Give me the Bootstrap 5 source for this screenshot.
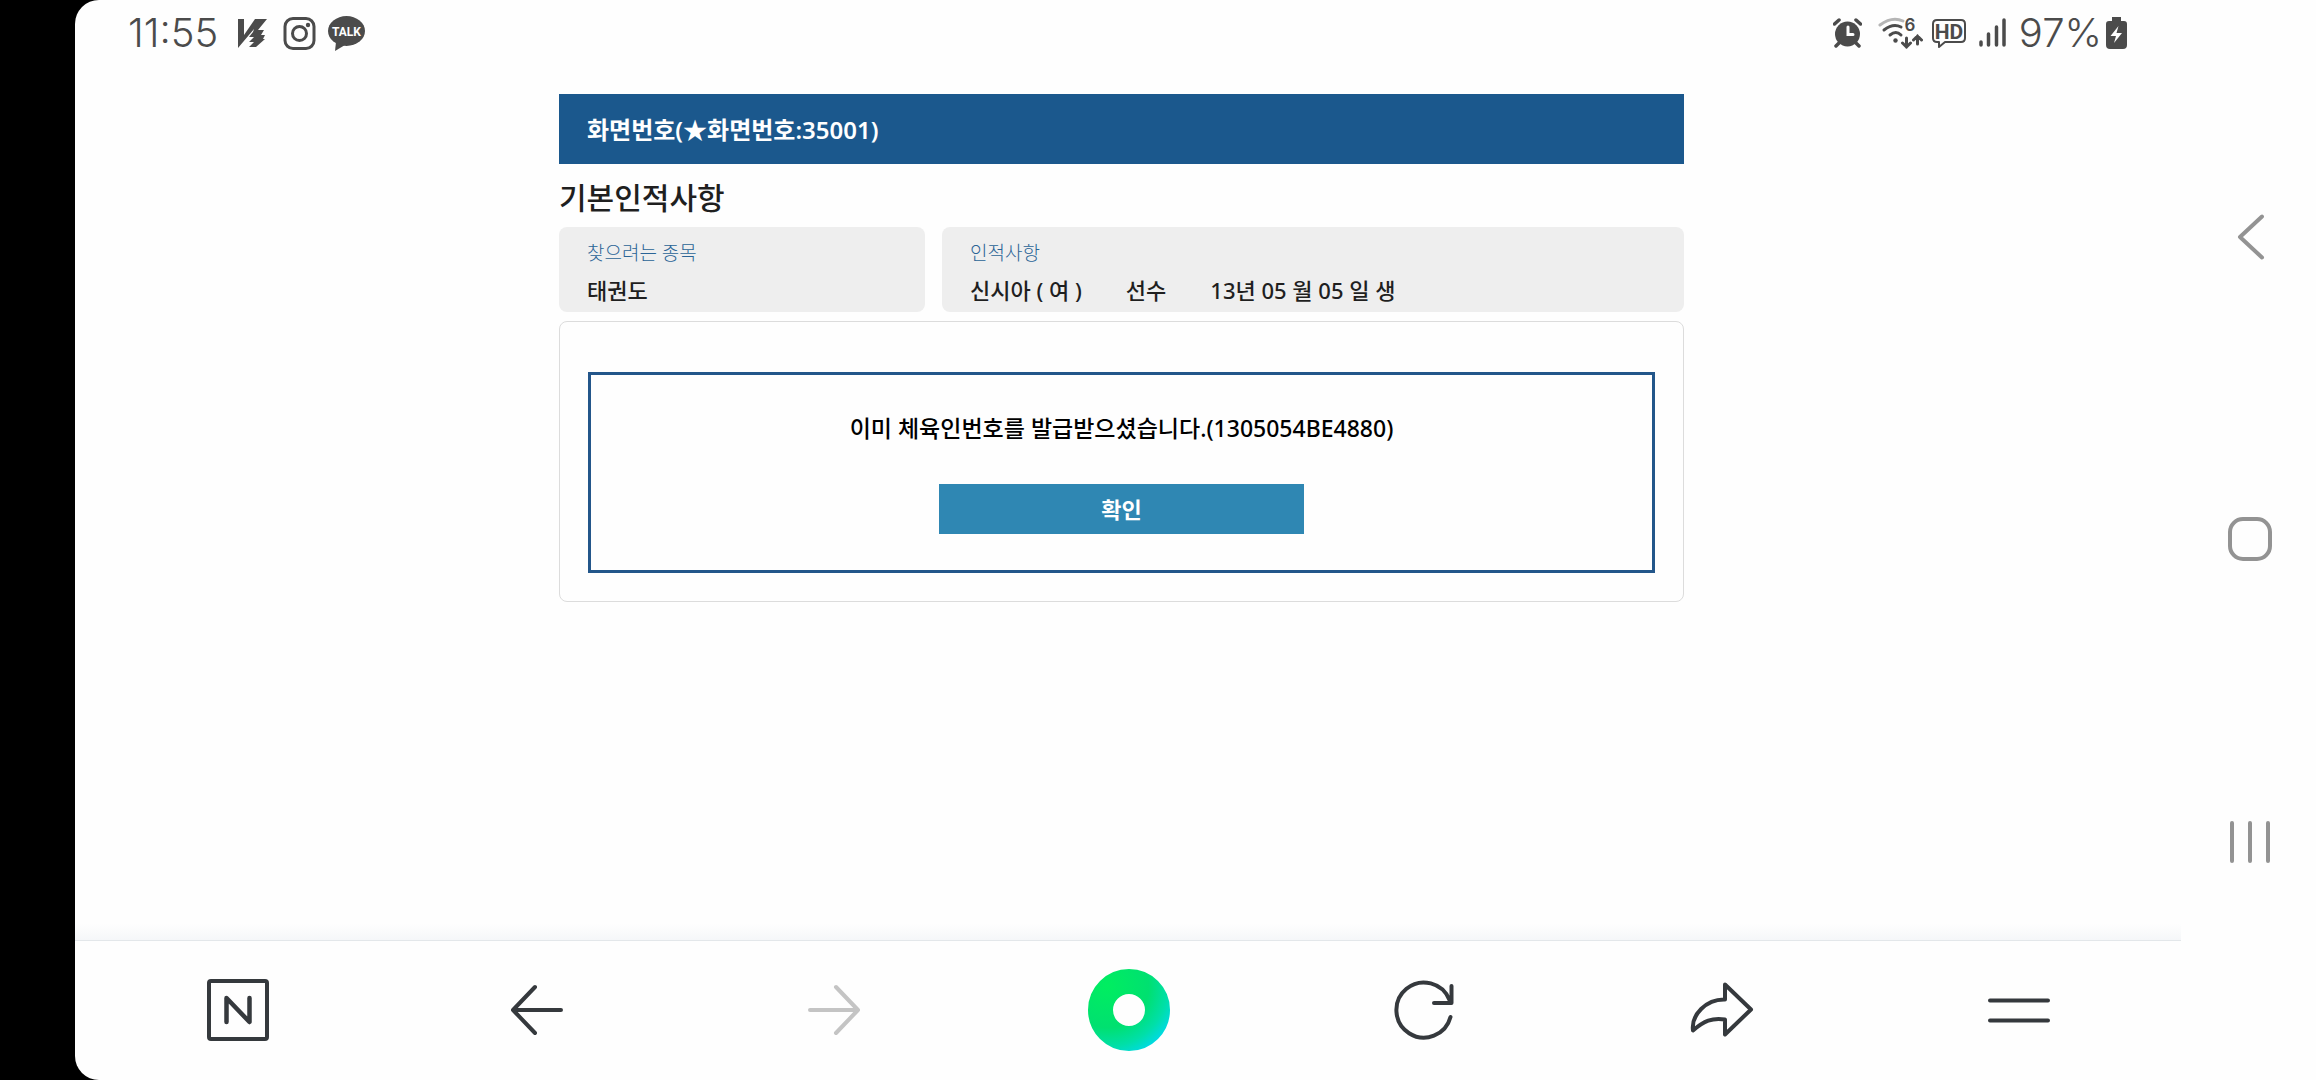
<!DOCTYPE html>
<html lang="ko">
<head>
<meta charset="utf-8">
<meta name="viewport" content="width=device-width, initial-scale=1">
<title>체육인번호 확인</title>
<link href="https://cdn.jsdelivr.net/npm/bootstrap@5.3.0/dist/css/bootstrap.min.css" rel="stylesheet">
<style>
  body { background: #000; color: #1f1f1f; font-family: "Noto Sans", "Noto Sans CJK KR", sans-serif; }
  .device { margin-left: 75px; background: #fefefe; border-radius: 24px 0 0 24px; }
  .statusbar { height: 66px; padding: 0 53px; color: #4b4b4b; font-family: Inter, "Noto Sans CJK KR", sans-serif; font-size: 40px; font-weight: 300; line-height: 66px; }
  .statusbar svg { height: 36px; flex: none; fill: currentColor; }
  .clock { margin-right: 20px; }
  .page { padding: 28px 13px 0 0; }
  .sheet { max-width: 1125px; }
  .screen-no { background: #1b588d; color: #fff; height: 70px; padding: 2px 28px 0; font-size: 24px; font-weight: 600; }
  .section-title { font-size: 30px; font-weight: 500; line-height: 36px; margin: 16px 0 11px; }
  .info-row { gap: 17px; margin-bottom: 9px; }
  .info-box { background: #eee; border-radius: 8px; height: 85px; padding: 12px 28px 0; }
  .info-sport { flex: 0 0 366px; }
  .info-name { color: #2a6496; font-size: 19px; font-weight: 300; line-height: 28px; }
  .info-value { font-size: 22px; font-weight: 500; line-height: 32px; margin-top: 7px; gap: 44px; }
  .result { border: 1px solid #dcdcdc; border-radius: 8px; padding: 50px 28px 28px; }
  .notice { border: 3px solid #23568a; padding: 36px 20px; }
  .notice p { color: #000; font-size: 23px; font-weight: 500; line-height: 34px; margin-bottom: 39px; }
  .btn-confirm { --bs-btn-bg: #2f87b3; --bs-btn-color: #fff; --bs-btn-hover-bg: #27749b; --bs-btn-hover-color: #fff; width: 365px; max-width: 100%; height: 50px; font-size: 22px; font-weight: 600; line-height: 32px; padding: 0; border: 0; }
  .toolbar-wrap { width: 100%; }
  .toolbar-shade { height: 16px; background: linear-gradient(#fefefe, #f5f7f9); }
  .toolbar { height: 140px; border-top: 1px solid #e3e7ea; padding: 0 14px 2px 15px; }
  .toolbar svg, .sysnav svg { fill: none; stroke-linecap: round; stroke-linejoin: round; }
  .toolbar svg { stroke: #35393d; stroke-width: 4; }
  .sysnav { width: 135px; padding: 86px 0 87px 2px; }
  .sysnav svg { stroke: #939393; stroke-width: 4; }
  .bare { flex: 1 1 0; border: 0; background: none; padding: 0; display: flex; align-items: center; justify-content: center; }
  .bare:disabled svg { stroke: #c4c4c4; }
</style>
</head>
<body>
<div class="device d-flex min-vh-100">
  <div class="d-flex flex-column flex-grow-1">
    <header class="statusbar d-flex align-items-center justify-content-between">
      <div class="d-flex align-items-center">
        <span class="clock">11:55</span>
        <svg class="me-3" width="29" viewBox="239 15 29 36" aria-label="V3"><path d="M239 19h6v16l11-16h12l-9 11h6l-3 5h4l-2 4h2l-9 8h-7l5-5h-5l5-5h-5l4-5 1-3-16 19z"/></svg>
        <svg class="me-2" width="33" viewBox="282 15 33 36" aria-label="Instagram"><g fill="none" stroke="currentColor" stroke-width="3"><rect x="284" y="18.500" width="29" height="30" rx="8"/><circle cx="298.500" cy="33.500" r="7"/></g><circle cx="307" cy="25" r="2.200"/></svg>
        <svg class="ms-1" width="38" viewBox="327 15 38 36" aria-label="TALK"><ellipse cx="345.500" cy="31" rx="18.500" ry="15"/><path d="M335 42l-1 9 10-6z"/><text x="345.500" y="36" font-size="12" font-family="Roboto, sans-serif" font-weight="700" text-anchor="middle" fill="#fff">TALK</text></svg>
      </div>
      <div class="d-flex align-items-center">
        <svg class="me-3" width="29" viewBox="1835 15 29 36" aria-label="알람"><circle cx="1849.500" cy="34" r="12.500"/><path d="M1836.500 24l4.500-4M1862.500 24l-4.500-4M1841 43l-3 3M1858 43l3 3" stroke="currentColor" stroke-width="3.500" stroke-linecap="round"/><path d="M1850 27v7.500h5" fill="none" stroke="#fefefe" stroke-width="3" stroke-linecap="round"/></svg>
        <svg class="me-2" width="45" viewBox="1879 15 45 36" aria-label="Wi-Fi 6"><g fill="none" stroke="currentColor" stroke-width="3" stroke-linecap="round"><path d="M1881 25q12-9 23-4" stroke="#b5b5b5"/><path d="M1885 30q9-7 17-3M1891 35q6-5 11 0"/><path d="M1907.500 38v9m-4-4l4 4 4-4M1918.500 44v-8m-4 4l4-4 4 4"/></g><circle cx="1896.500" cy="40.500" r="2.200"/><text x="1905.500" y="31" font-size="17" font-weight="600">6</text></svg>
        <svg class="me-2" width="36" viewBox="1930 15 36 36" aria-label="HD"><path d="M1936 20h24q4 0 4 4v14q0 4-4 4h-16l-6 5v-5h-2q-4 0-4-4V24q0-4 4-4z" fill="none" stroke="currentColor" stroke-width="2" stroke-linejoin="round"/><text x="1948" y="38.500" font-size="21" font-weight="700" font-family="Roboto, sans-serif" text-anchor="middle">HD</text></svg>
        <svg class="me-2 ms-1" width="28" viewBox="1977 15 28 36" aria-label="신호"><path d="M1979 42v3M1986.500 34v11M1994.500 27v18M2002 20v25" stroke="currentColor" stroke-width="3.500" stroke-linecap="round"/></svg>
        <span class="ms-1 me-1">97%</span>
        <svg width="22" viewBox="2107 15 22 36" aria-label="충전 중"><path d="M2113 17h9v4h3q3 0 3 3v21q0 4-4 4h-13q-4 0-4-4V24q0-3 3-3h3z"/><path d="M2119.500 26l-8 10h5.500l-2 7 8-10h-5.500z" fill="#fefefe"/></svg>
      </div>
    </header>

    <main class="page flex-grow-1">
      <div class="sheet mx-auto">
        <div class="screen-no d-flex align-items-center">화면번호(★화면번호:35001)</div>
        <h1 class="section-title">기본인적사항</h1>
        <div class="info-row d-flex">
          <section class="info-box info-sport">
            <div class="info-name">찾으려는 종목</div>
            <div class="info-value">태권도</div>
          </section>
          <section class="info-box flex-grow-1">
            <div class="info-name">인적사항</div>
            <div class="info-value d-flex"><span>신시아 ( 여 )</span><span>선수</span><span>13년 05 월 05 일 생</span></div>
          </section>
        </div>
        <section class="result">
          <div class="notice text-center">
            <p>이미 체육인번호를 발급받으셨습니다.(1305054BE4880)</p>
            <button type="button" class="btn btn-confirm rounded-0">확인</button>
          </div>
        </section>
      </div>
    </main>

    <footer class="toolbar-wrap">
      <div class="toolbar-shade"></div>
      <nav class="toolbar d-flex align-items-stretch" aria-label="브라우저 도구">
        <button type="button" class="bare" aria-label="네이버 홈"><svg width="64" height="64" viewBox="0 0 64 64"><rect x="3" y="3" width="58" height="58" rx="2"/><path d="M20.500 44V20l23 24V20" stroke-width="4.500"/></svg></button>
        <button type="button" class="bare" aria-label="뒤로"><svg width="64" height="64" viewBox="0 0 64 64"><path d="M58 32H10M32 9L10 32l22 23"/></svg></button>
        <button type="button" class="bare" aria-label="앞으로" disabled><svg width="64" height="64" viewBox="0 0 64 64"><path d="M10 32h48M36 9l22 23-22 23"/></svg></button>
        <button type="button" class="bare" aria-label="그린닷"><svg width="84" height="84" viewBox="0 0 84 84"><defs><radialGradient id="dot" gradientUnits="userSpaceOnUse" cx="20" cy="18" r="76"><stop offset="0" stop-color="#00ee60"/><stop offset=".55" stop-color="#00e070"/><stop offset=".8" stop-color="#00dfa8"/><stop offset="1" stop-color="#00d9ee"/></radialGradient></defs><circle cx="42" cy="42" r="28.500" stroke="url(#dot)" stroke-width="25"/></svg></button>
        <button type="button" class="bare" aria-label="새로고침"><svg width="64" height="64" viewBox="0 0 64 64"><path d="M57.500 39A27.500 27.500 0 1 1 56.500 22M58.500 8v17H41"/></svg></button>
        <button type="button" class="bare" aria-label="공유"><svg width="66" height="64" viewBox="0 0 66 64"><path d="M36 6.500L62 31.500 36 56.500V41.500C23 39.500 15 43 4 52.500 2 37 17 21 36 21.500z"/></svg></button>
        <button type="button" class="bare" aria-label="메뉴"><svg width="64" height="64" viewBox="0 0 64 64"><path d="M3 22.500h58M3 42.500h58"/></svg></button>
      </nav>
    </footer>
  </div>

  <nav class="sysnav d-flex flex-column flex-shrink-0" aria-label="시스템 탐색">
    <button type="button" class="bare" aria-label="이전"><svg width="48" height="48" viewBox="0 0 48 48"><path d="M36 3.500L14 24l22 20.500"/></svg></button>
    <button type="button" class="bare" aria-label="홈"><svg width="48" height="48" viewBox="0 0 48 48"><rect x="4" y="4" width="40" height="40" rx="13"/></svg></button>
    <button type="button" class="bare" aria-label="최근 앱"><svg width="48" height="48" viewBox="0 0 48 48"><path d="M6 5v38M24 5v38M42 5v38"/></svg></button>
  </nav>
</div>
<script src="https://cdn.jsdelivr.net/npm/bootstrap@5.3.0/dist/js/bootstrap.bundle.min.js"></script>
</body>
</html>
